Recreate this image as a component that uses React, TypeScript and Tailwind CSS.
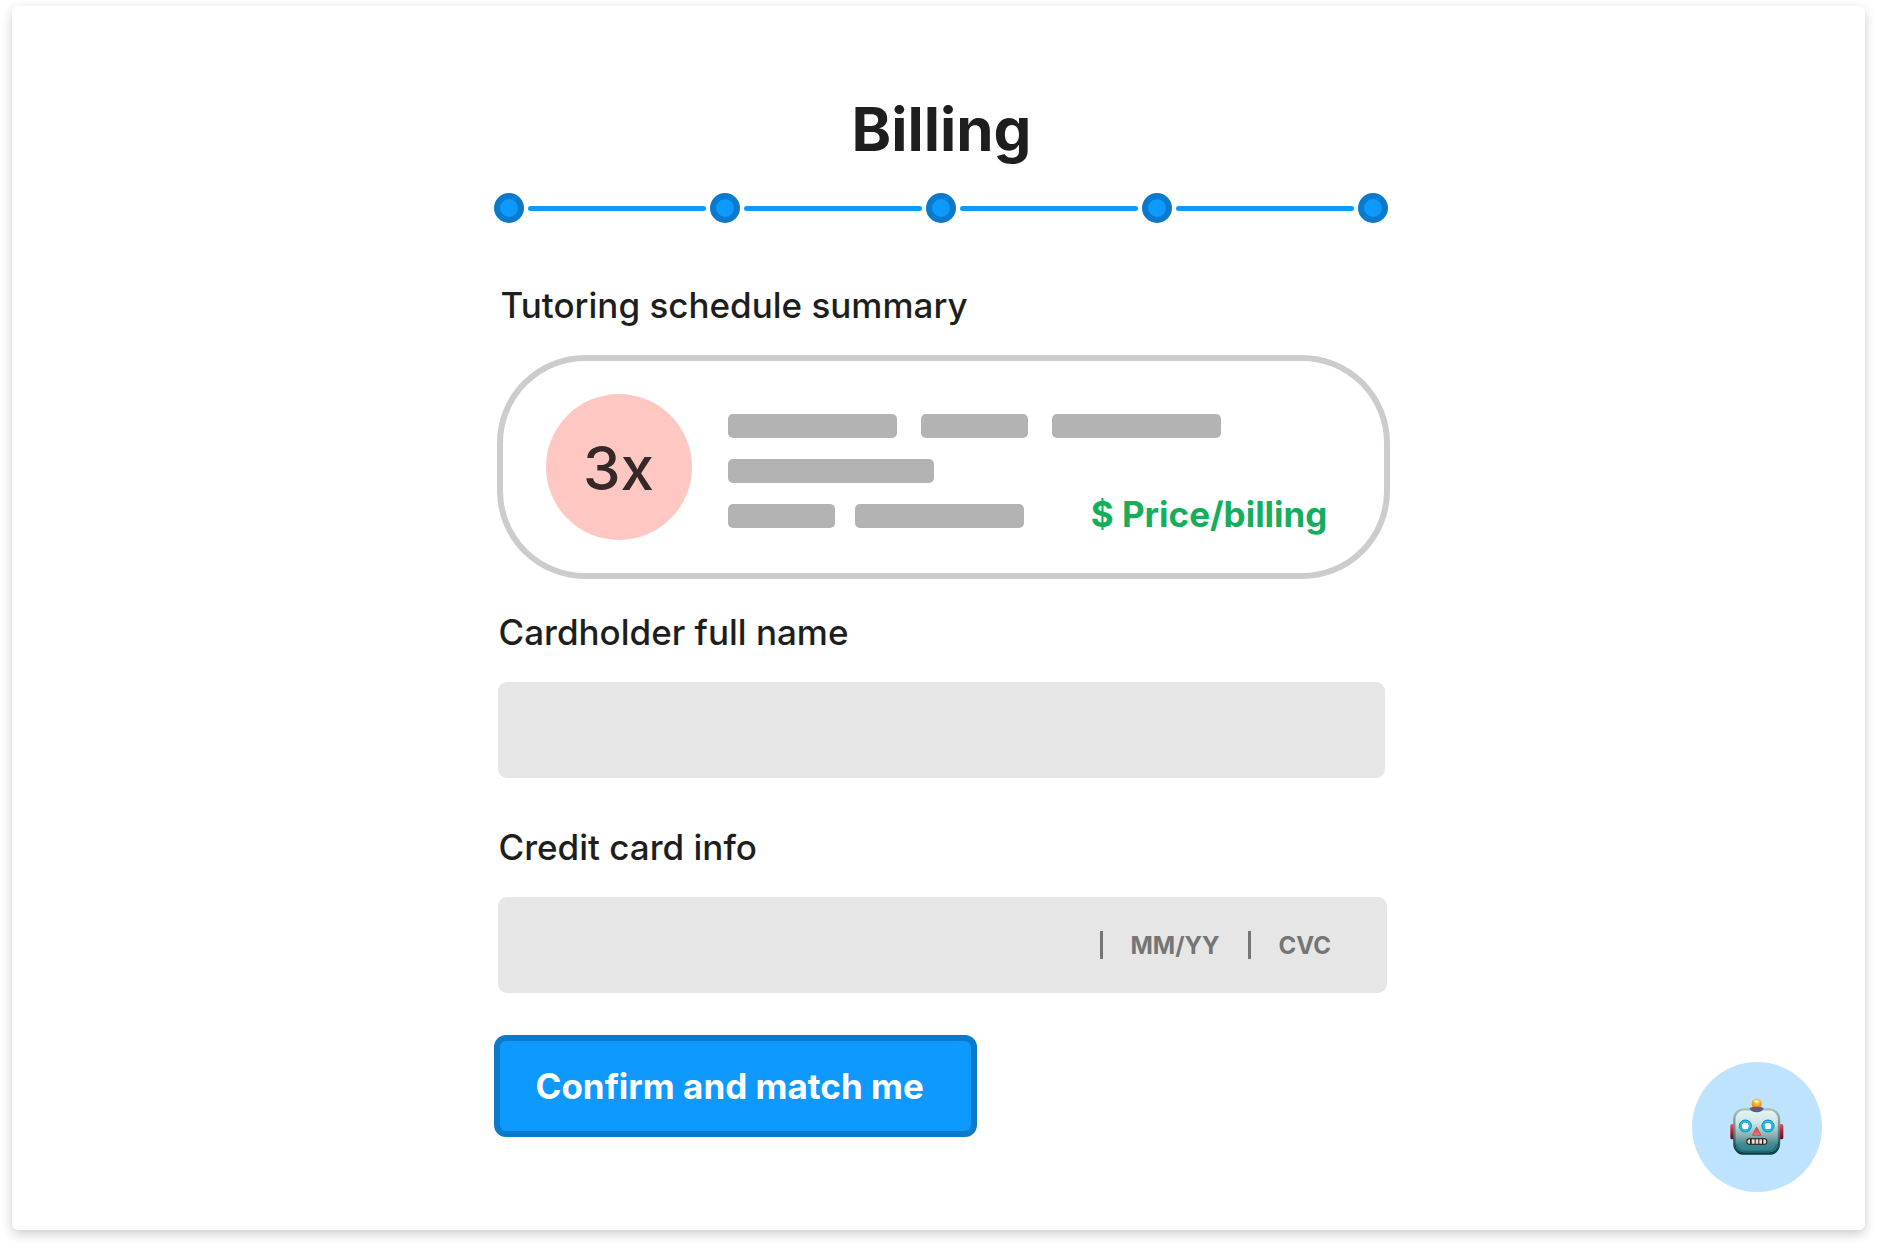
const STEPS = ["Subject", "Level", "Tutor", "Schedule", "Billing"];

function RobotIcon() {
  return (
    <svg width="54" height="58" viewBox="0 0 162 174" fill="none" aria-hidden="true">
      <defs>
        <linearGradient id="head" x1="0" y1="0" x2="0" y2="1">
          <stop offset="0" stopColor="#e3f6f4" />
          <stop offset="0.3" stopColor="#cfe6e6" />
          <stop offset="0.62" stopColor="#84a9ab" />
          <stop offset="0.78" stopColor="#3f8b93" />
          <stop offset="1" stopColor="#2c7d86" />
        </linearGradient>
        <linearGradient id="rim" x1="0" y1="0" x2="0" y2="1">
          <stop offset="0" stopColor="#a9bfb8" />
          <stop offset="0.4" stopColor="#718e8f" />
          <stop offset="0.75" stopColor="#1f5d61" />
          <stop offset="1" stopColor="#063f41" />
        </linearGradient>
        <linearGradient id="ear" x1="0" y1="0" x2="0" y2="1">
          <stop offset="0" stopColor="#e0566a" />
          <stop offset="0.4" stopColor="#c01f38" />
          <stop offset="1" stopColor="#5c0c14" />
        </linearGradient>
        <radialGradient id="bulb" cx="0.5" cy="0.3" r="0.7">
          <stop offset="0" stopColor="#ffe06a" />
          <stop offset="0.5" stopColor="#ffad1f" />
          <stop offset="1" stopColor="#e07a00" />
        </radialGradient>
        <linearGradient id="nose" x1="0" y1="0" x2="0" y2="1">
          <stop offset="0" stopColor="#c8424c" />
          <stop offset="1" stopColor="#f47a74" />
        </linearGradient>
      </defs>
      <rect x="1" y="78" width="18" height="46" rx="5" fill="url(#ear)" />
      <rect x="142" y="78" width="18" height="46" rx="5" fill="url(#ear)" />
      <circle cx="80" cy="17" r="15" fill="url(#bulb)" />
      <ellipse cx="80" cy="10" rx="7" ry="4" fill="#fff0a8" />
      <rect x="13" y="34" width="134" height="133" rx="29" fill="url(#head)" stroke="url(#rim)" strokeWidth="7" />
      <path d="M59 30Q66 26 80 26T101 30C99 39 91 43 80 43S61 39 59 30Z" fill="#66558a" />
      <path d="M20 139Q26 159 44 160H116Q134 159 140 139" stroke="#12565b" strokeWidth="4" opacity="0.6" />
      <circle cx="46" cy="84" r="15" fill="#fff" stroke="#0e87a8" strokeWidth="9" />
      <circle cx="46" cy="84" r="14" stroke="#1fc0e8" strokeWidth="6" />
      <circle cx="114" cy="84" r="15" fill="#fff" stroke="#0e87a8" strokeWidth="9" />
      <circle cx="114" cy="84" r="14" stroke="#1fc0e8" strokeWidth="6" />
      <path d="M80 87L93 112H67Z" fill="url(#nose)" stroke="#b43c48" strokeWidth="2" strokeLinejoin="round" />
      <rect x="49" y="121" width="63" height="19" rx="9" fill="#2b1a17" />
      <path d="M60 124V137H57Q52 136 52 131T57 124ZM65 124H74V137H65ZM77 124H85V137H77ZM88 124H96V137H88ZM100 124H104Q109 125 109 131T104 137H100Z" fill="#e4e1d8" />
    </svg>
  );
}

function Stepper() {
  return (
    <ol className="mt-7 flex items-center gap-1 pr-0.5" aria-label="Progress">
      {STEPS.map((step, i) => (
        <li key={step} aria-label={step} className={i === 0 ? "flex items-center" : "flex flex-1 items-center gap-1"}>
          {i > 0 && <span className="h-[5px] flex-1 rounded-full bg-[#0d99ff]" />}
          <span className="size-[30px] rounded-full border-[6px] border-[#0a7acc] bg-[#0d99ff]" />
        </li>
      ))}
    </ol>
  );
}

function Bar({ className }: { className: string }) {
  return <span className={`h-6 rounded-[5px] bg-[#b3b3b3] ${className}`} />;
}

function Summary() {
  return (
    <section className="ml-[3px] mt-7 flex h-56 items-center rounded-[88px] border-[6px] border-[#cccccc] pl-[43px] pr-14">
      <div className="flex size-[146px] shrink-0 items-center justify-center rounded-full bg-[#ffc7c2] pt-0.5 text-[60px] leading-[72px] font-medium text-[#352829]">
        3x
      </div>
      <div className="ml-9 flex flex-1 flex-col gap-[21px] pt-2">
        <div className="flex gap-6">
          <Bar className="w-[169px]" />
          <Bar className="w-[107px]" />
          <Bar className="w-[169px]" />
        </div>
        <Bar className="w-[206px]" />
        <div className="flex h-6 items-center gap-5">
          <Bar className="w-[107px]" />
          <Bar className="w-[169px]" />
          <strong className="ml-auto pb-1 whitespace-nowrap text-[35px] leading-[44px] font-bold text-[#14ae5c]">
            $ Price/billing
          </strong>
        </div>
      </div>
    </section>
  );
}

function Separator() {
  return <span className="h-7 w-[3px] bg-[#757575]" />;
}

export default function App() {
  return (
    <div className="flex min-h-screen flex-col bg-white px-3 pt-1.5 pb-[18px] font-['Inter',sans-serif] text-[#1e1e1e]">
      <main className="relative flex-1 rounded-md bg-white pt-[87px] pb-[93px] pl-1.5 shadow-[0_4px_12px_rgba(0,0,0,0.2)]">
        <form className="mx-auto max-w-[896px]" onSubmit={(e) => e.preventDefault()}>
          <h1 className="text-center text-[60px] leading-[72px] font-bold">Billing</h1>
          <Stepper />

          <h2 className="mt-[60px] ml-[7px] text-[35px] leading-[44px] font-medium">Tutoring schedule summary</h2>
          <Summary />

          <label htmlFor="cardholder" className="mt-[31px] ml-[5px] block text-[35px] leading-[44px] font-medium">
            Cardholder full name
          </label>
          <div className="mt-7 pr-[5px] pl-1">
            <input
              id="cardholder"
              type="text"
              className="block h-24 w-full rounded-[9px] bg-[#e6e6e6] px-9 text-[24px] font-bold"
            />
          </div>

          <label htmlFor="card-number" className="mt-[47px] ml-[5px] block text-[35px] leading-[44px] font-medium">
            Credit card info
          </label>
          <div className="mt-7 mr-[3px] ml-1 flex h-24 items-center rounded-[9px] bg-[#e6e6e6] pr-10 text-[24px] font-bold">
            <input id="card-number" type="text" inputMode="numeric" className="h-full min-w-0 flex-1 px-9" />
            <Separator />
            <input
              type="text"
              aria-label="Expiry date"
              placeholder="MM/YY"
              className="mr-4 ml-7 w-[101px] pt-0.5 placeholder:text-[#757575]"
            />
            <Separator />
            <input
              type="text"
              aria-label="Security code"
              placeholder="CVC"
              className="ml-7 w-[68px] pt-0.5 placeholder:text-[#757575]"
            />
          </div>

          <button
            type="submit"
            className="mt-[42px] h-[102px] w-[483px] rounded-xl border-[6px] border-[#0a7acc] bg-[#0d99ff] pl-9 text-left text-[35px] leading-[44px] font-bold text-white"
          >
            Confirm and match me
          </button>
        </form>

        <button
          type="button"
          aria-label="Open chat assistant"
          className="absolute right-[43px] bottom-[38px] flex size-[130px] items-center justify-center rounded-full bg-[#bde3ff]"
        >
          <RobotIcon />
        </button>
      </main>
    </div>
  );
}
